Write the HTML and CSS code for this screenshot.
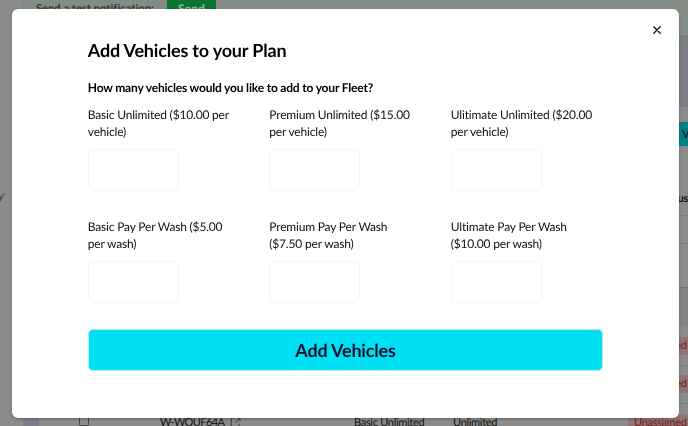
FILE: index.html
```html
<!DOCTYPE html>
<html lang="en">
<head>
    <meta charset="utf-8">
    <title>Add Vehicles to your Plan</title>
    <link rel="stylesheet" href="styles.css">
</head>
<body>
    <!-- Fleet page behind the dialog -->
    <div class="page">
        <div class="sidebar">y</div>
        <div class="main">
            <div class="notice">
                <span class="notice-label">Send a test notification:</span>
                <span class="notice-send">Send</span>
            </div>
            <div class="banner"></div>
            <div class="toolbar"><span class="toolbar-button">V</span></div>
            <div class="table-head">us</div>
            <div class="row row-filter"></div>
            <div class="row row-group"></div>
            <div class="row row-tint"></div>
            <div class="row row-vehicle"><span class="badge">Unassigned</span></div>
            <div class="row row-vehicle"><span class="badge">Unassigned</span></div>
            <div class="row row-vehicle">
                <span class="row-handle"></span>
                <span class="checkbox"></span>
                <span class="vehicle-name">W-WOUF64A
                    <svg class="open-icon" viewBox="0 0 11 11" fill="none" stroke="#333" stroke-width="0.9">
                        <path d="M4.5 1H1.2v9H9V6.8M6.8 1H10v3.2M10 1L5.2 6"/>
                    </svg>
                </span>
                <span class="vehicle-plan">Basic Unlimited</span>
                <span class="vehicle-limit">Unlimited</span>
                <span class="badge">Unassigned</span>
            </div>
        </div>
    </div>

    <!-- Dialog -->
    <div class="overlay">
        <div class="modal">
            <button class="close-button" aria-label="Close">
                <svg viewBox="0 0 8 8" stroke="#111" stroke-width="1.3" stroke-linecap="round">
                    <path d="M0.8 0.8L7.2 7.2M7.2 0.8L0.8 7.2"/>
                </svg>
            </button>
            <h1 class="title">Add Vehicles to your Plan</h1>
            <p class="question">How many vehicles would you like to add to your Fleet?</p>
            <div class="plans">
                <div class="plan">
                    <label class="plan-label" for="basic">Basic Unlimited ($10.00 per vehicle)</label>
                    <input class="plan-input" id="basic" type="text">
                </div>
                <div class="plan">
                    <label class="plan-label" for="premium">Premium Unlimited ($15.00 per vehicle)</label>
                    <input class="plan-input" id="premium" type="text">
                </div>
                <div class="plan">
                    <label class="plan-label" for="ultimate">Ulitimate Unlimited ($20.00 per vehicle)</label>
                    <input class="plan-input" id="ultimate" type="text">
                </div>
                <div class="plan">
                    <label class="plan-label" for="basic-wash">Basic Pay Per Wash ($5.00 per wash)</label>
                    <input class="plan-input" id="basic-wash" type="text">
                </div>
                <div class="plan">
                    <label class="plan-label" for="premium-wash">Premium Pay Per Wash ($7.50 per wash)</label>
                    <input class="plan-input" id="premium-wash" type="text">
                </div>
                <div class="plan">
                    <label class="plan-label" for="ultimate-wash">Ultimate Pay Per Wash ($10.00 per wash)</label>
                    <input class="plan-input" id="ultimate-wash" type="text">
                </div>
            </div>
            <button class="add-button">Add Vehicles</button>
        </div>
    </div>
</body>
</html>
```

FILE: styles.css
```css
* {
    box-sizing: border-box;
}

body {
    margin: 0;
    height: 426px;
    overflow: hidden;
    font-family: Lato, "Liberation Sans", sans-serif;
    font-size: 11px;
    letter-spacing: -0.3px;
    text-rendering: geometricPrecision;
    color: #111;
    background-color: #8b8b8b;
}

/* Page behind the dialog */
.page {
    display: flex;
    height: 426px;
    overflow: hidden;
}

.sidebar {
    display: flex;
    justify-content: flex-end;
    width: 23px;
    padding: 188px 19px 0 0;
    font-size: 13px;
    line-height: 15px;
    font-style: italic;
    color: #444;
}

.main {
    flex: 1;
}

.notice {
    display: flex;
    align-items: flex-start;
    height: 35px;
    padding-left: 12px;
    letter-spacing: 0.08px;
    background-color: #838b85;
    border-left: 1px solid #71917b;
    border-bottom: 1px solid #71a17f;
}

.notice-label {
    width: 131px;
    padding-top: 1px;
    line-height: 15px;
    font-weight: bold;
    color: #1b4128;
}

.notice-send {
    width: 49px;
    height: 20px;
    padding-top: 1px;
    line-height: 15px;
    font-size: 12px;
    font-weight: bold;
    text-align: center;
    color: #9bb3a1;
    background-color: #0b7431;
}

.banner {
    height: 72px;
    background-color: #7d7d85;
}

.toolbar {
    display: flex;
    justify-content: flex-end;
    height: 81px;
    padding-top: 15px;
}

.toolbar-button {
    width: 30px;
    height: 24px;
    padding-left: 24px;
    line-height: 25px;
    font-weight: bold;
    color: #11262b;
    background-color: #007f89;
    overflow: hidden;
}

.table-head {
    height: 27px;
    padding-top: 3px;
    line-height: 15px;
    font-weight: bold;
    text-align: right;
}

.row {
    display: flex;
    align-items: center;
    border-bottom: 1px solid #7b7b7b;
}

.row-filter {
    height: 29px;
    border-top: 1px solid #7f7f7f;
}

.row-group {
    height: 44px;
    border-bottom-color: #6d6d6d;
}

.row-tint {
    height: 39px;
    border-bottom: none;
    background-color: #858484;
}

.row-vehicle {
    height: 38.5px;
}

.row-handle {
    width: 16px;
    height: 38px;
    background-color: #7d7d85;
}

.checkbox {
    width: 10px;
    height: 10px;
    margin: -4px 71px 0 40px;
    border: 1px solid #444;
    border-radius: 1px;
}

.vehicle-name {
    width: 194px;
    letter-spacing: -0.6px;
}

.open-icon {
    width: 11px;
    height: 11px;
    margin-left: 4px;
    vertical-align: -2px;
}

.vehicle-plan {
    width: 99px;
}

.badge {
    width: 60px;
    height: 18px;
    margin-left: auto;
    padding-left: 6px;
    line-height: 18px;
    color: #711a1a;
    background-color: #8f7473;
}

/* Dialog */
.overlay {
    position: fixed;
    inset: 0;
    padding: 9.4px 9px 8px 12.4px;
    letter-spacing: -0.18px;
}

.modal {
    position: relative;
    height: 408.6px;
    padding: 30.6px 76px 0 75.4px;
    background-color: #fff;
    border-radius: 6px;
    box-shadow: 0 1px 3px rgba(0, 0, 0, 0.25);
}

.close-button {
    position: absolute;
    top: 16.4px;
    right: 18px;
    display: flex;
    padding: 0;
    border: none;
    background: none;
}

.close-button svg {
    width: 8px;
    height: 8px;
}

.title {
    margin: 0;
    font-size: 18px;
    line-height: 21px;
    color: #000;
}

.question {
    margin: 18px 0 9px;
    font-size: 12px;
    line-height: 18px;
    font-weight: bold;
    color: #000;
}

.plans {
    display: grid;
    grid-template-columns: repeat(3, 151px);
    column-gap: 30.5px;
    row-gap: 26px;
}

.plan-label {
    display: block;
    height: 35px;
    margin-bottom: 8px;
    font-size: 12px;
    line-height: 17.5px;
}

.plan-input {
    display: block;
    width: 91px;
    height: 42px;
    margin-bottom: 1px;
    border: 1px solid #f5f5f7;
    border-radius: 5px;
    background-color: #fff;
}

.add-button {
    display: block;
    width: 515.5px;
    height: 42px;
    margin-top: 25px;
    padding: 1px 0 0;
    font-family: inherit;
    font-size: 18px;
    font-weight: bold;
    letter-spacing: inherit;
    text-rendering: inherit;
    color: #07102b;
    background-color: #00e0f3;
    border: 1px solid #b5edf3;
    border-radius: 5px;
}
```
